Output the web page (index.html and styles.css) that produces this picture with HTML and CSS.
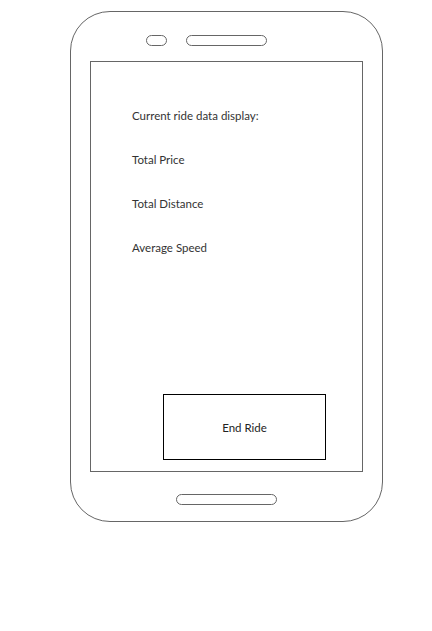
FILE: index.html
```html
<!DOCTYPE html>
<html>
<head>
<meta charset="utf-8">
<link rel="stylesheet" href="styles.css">
</head>
<body>
<div class="phone">
  <div class="top">
    <div class="pill camera"></div>
    <div class="pill speaker"></div>
  </div>
  <div class="screen">
    <div class="info">
      <div class="line">Current ride data display:</div>
      <div class="line">Total Price</div>
      <div class="line">Total Distance</div>
      <div class="line">Average Speed</div>
    </div>
    <div class="end-btn">End Ride</div>
  </div>
  <div class="bottom">
    <div class="pill home"></div>
  </div>
</div>
</body>
</html>
```
FILE: styles.css
```css
html, body {
  margin: 0;
  padding: 0;
  background: #fff;
}
body {
  font-family: "Source Sans Pro", Lato, "Noto Sans", sans-serif;
  font-size: 11.5px;
  color: #333;
}
.phone {
  box-sizing: border-box;
  width: 313px;
  height: 511px;
  margin: 11px 0 0 70px;
  border: 1px solid #666;
  border-radius: 40px;
  display: flex;
  flex-direction: column;
}
.top {
  height: 49px;
  box-sizing: border-box;
  padding: 23px 0 0 75px;
  display: flex;
  align-items: flex-start;
  gap: 19px;
}
.pill {
  box-sizing: border-box;
  height: 11px;
  border: 1px solid #666;
  border-radius: 6px;
}
.camera { width: 21px; }
.speaker { width: 81px; }
.screen {
  box-sizing: border-box;
  margin-left: 19px;
  width: 273px;
  height: 411px;
  border: 1px solid #666;
  display: flex;
  flex-direction: column;
}
.info {
  padding: 44px 0 0 41px;
  display: flex;
  flex-direction: column;
  gap: 24px;
}
.line {
  line-height: 20px;
  height: 20px;
}
.end-btn {
  box-sizing: border-box;
  margin: auto 0 11px 72px;
  width: 163px;
  height: 66px;
  border: 1px solid #000;
  display: flex;
  align-items: center;
  justify-content: center;
  color: #222;
}
.bottom {
  display: flex;
  justify-content: center;
  padding-top: 22px;
}
.home { width: 101px; }
```
